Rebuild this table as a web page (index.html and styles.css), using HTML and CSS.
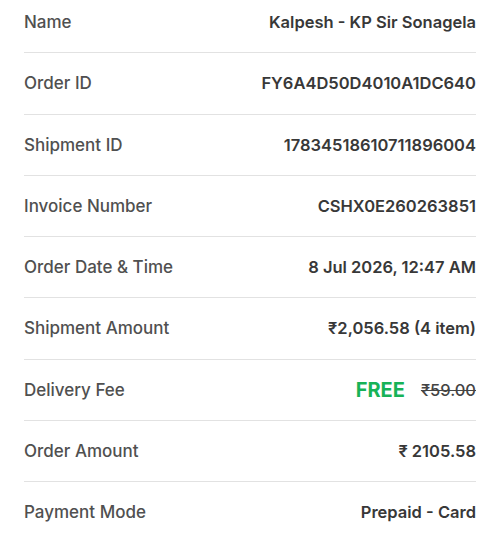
FILE: index.html
```html
<!DOCTYPE html>
<html lang="en">
<head>
  <meta charset="UTF-8">
  <meta name="viewport" content="width=device-width, initial-scale=1.0">
  <title>Order Details</title>
  <link rel="stylesheet" href="styles.css">
</head>
<body>
  <div class="details">
    <div class="row">
      <span class="label">Name</span>
      <span class="value">Kalpesh - KP Sir Sonagela</span>
    </div>
    <div class="row">
      <span class="label">Order ID</span>
      <span class="value">FY6A4D50D4010A1DC640</span>
    </div>
    <div class="row">
      <span class="label">Shipment ID</span>
      <span class="value">17834518610711896004</span>
    </div>
    <div class="row">
      <span class="label">Invoice Number</span>
      <span class="value">CSHX0E260263851</span>
    </div>
    <div class="row">
      <span class="label">Order Date &amp; Time</span>
      <span class="value">8 Jul 2026, 12:47 AM</span>
    </div>
    <div class="row">
      <span class="label">Shipment Amount</span>
      <span class="value">₹2,056.58 (4 item)</span>
    </div>
    <div class="row">
      <span class="label">Delivery Fee</span>
      <span class="value">
        <span class="free">FREE</span>
        <span class="old-price">₹59.00</span>
      </span>
    </div>
    <div class="row">
      <span class="label">Order Amount</span>
      <span class="value">₹ 2105.58</span>
    </div>
    <div class="row">
      <span class="label">Payment Mode</span>
      <span class="value">Prepaid - Card</span>
    </div>
  </div>
</body>
</html>
```

FILE: styles.css
```css
body {
  margin: 0;
  background: #ffffff;
  font-family: Inter, "Noto Sans", Arial, sans-serif;
}

.details {
  padding: 0 19px 0 24px;
}

.row {
  display: flex;
  justify-content: space-between;
  align-items: center;
  padding: 20px 0;
  line-height: 20.25px;
  border-bottom: 1px solid #e2e2e2;
}

.row:first-child {
  padding-top: 12px;
}

.row:last-child {
  border-bottom: none;
}

.label {
  font-size: 17px;
  font-weight: 500;
  color: #505050;
}

.value {
  font-size: 16.5px;
  font-weight: 600;
  color: #383838;
  display: flex;
  align-items: center;
}

.free {
  font-size: 20px;
  font-weight: 700;
  color: #17b257;
  margin-right: 16px;
}

.old-price {
  font-weight: 500;
  color: #444444;
  text-decoration: line-through;
}
```
